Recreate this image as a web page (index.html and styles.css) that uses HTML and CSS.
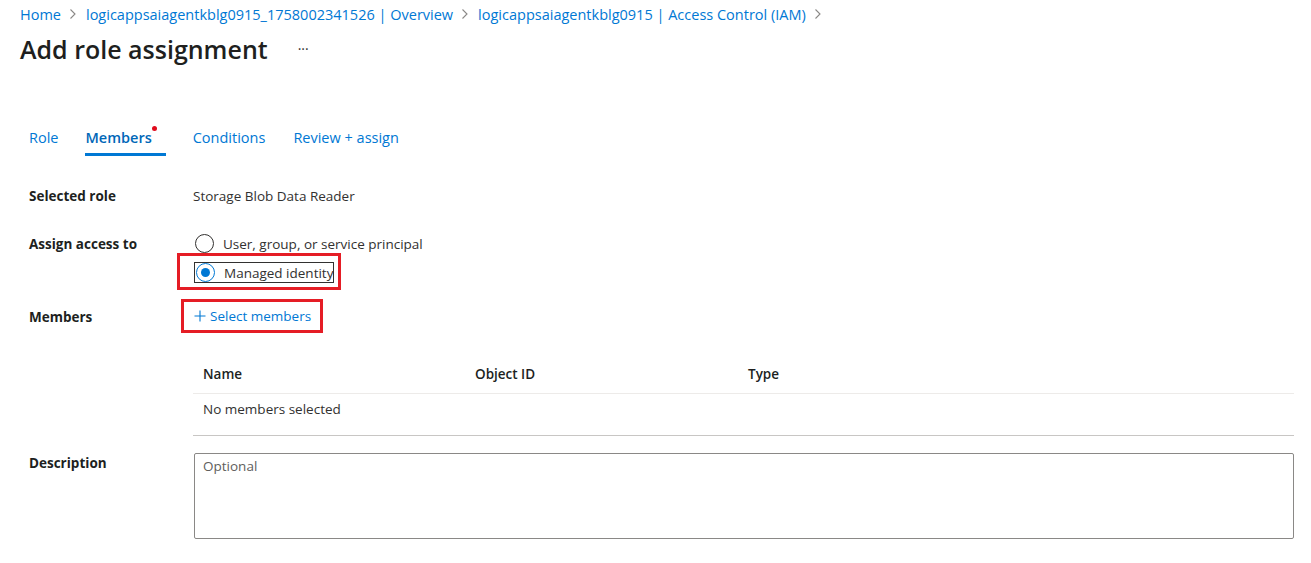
FILE: index.html
```html
<!DOCTYPE html>
<html>
<head>
<meta charset="utf-8">
<link rel="stylesheet" href="styles.css">
</head>
<body>
<div class="page">
  <nav class="crumbs">
    <a class="crumb">Home</a>
    <span class="chev"><svg width="8" height="12" viewBox="0 0 8 12"><path d="M1.5 1.5 L6 6 L1.5 10.5" fill="none" stroke="#8a8886" stroke-width="1.1"/></svg></span>
    <a class="crumb">logicappsaiagentkblg0915_1758002341526 | Overview</a>
    <span class="chev"><svg width="8" height="12" viewBox="0 0 8 12"><path d="M1.5 1.5 L6 6 L1.5 10.5" fill="none" stroke="#8a8886" stroke-width="1.1"/></svg></span>
    <a class="crumb">logicappsaiagentkblg0915 | Access Control (IAM)</a>
    <span class="chev"><svg width="8" height="12" viewBox="0 0 8 12"><path d="M1.5 1.5 L6 6 L1.5 10.5" fill="none" stroke="#8a8886" stroke-width="1.1"/></svg></span>
  </nav>
  <div class="titlebar">
    <h1 class="title">Add role assignment</h1>
    <span class="more">···</span>
  </div>

  <div class="content">
    <div class="tabs">
      <div class="tab">Role</div>
      <div class="tab active">Members<span class="dot"></span></div>
      <div class="tab">Conditions</div>
      <div class="tab">Review + assign</div>
    </div>

    <div class="row r-role">
      <div class="label">Selected role</div>
      <div class="value">Storage Blob Data Reader</div>
    </div>

    <div class="row r-assign">
      <div class="label">Assign access to</div>
      <div class="value radios">
        <div class="radio first"><span class="circle"></span><span>User, group, or service principal</span></div>
        <div class="hl hl-radio">
          <div class="radio checked focus"><span class="circle"><span class="inner"></span></span><span>Managed identity</span></div>
        </div>
      </div>
    </div>

    <div class="row r-members">
      <div class="label">Members</div>
      <div class="value">
        <div class="hl hl-select">
          <span class="select"><svg class="plus" width="12" height="12" viewBox="0 0 12 12"><path d="M6 0.5 V11.5 M0.5 6 H11.5" stroke="#0078d4" stroke-width="1.1" fill="none"/></svg>Select members</span>
        </div>
      </div>
    </div>

    <div class="row r-table">
      <div class="label"></div>
      <div class="value grid">
        <div class="thead">
          <div class="c1">Name</div>
          <div class="c2">Object ID</div>
          <div class="c3">Type</div>
        </div>
        <div class="tbody">No members selected</div>
      </div>
    </div>

    <div class="row r-desc">
      <div class="label">Description</div>
      <div class="value">
        <div class="textarea">Optional</div>
      </div>
    </div>
  </div>
</div>
</body>
</html>
```
FILE: styles.css
```css
* { box-sizing: border-box; }
html, body { margin: 0; padding: 0; background: #fff; }
body {
  font-family: "Open Sans", "Noto Sans", "Liberation Sans", sans-serif;
  color: #323130;
  font-size: 13.5px;
}
.page { width: 1311px; height: 563px; overflow: hidden; }

.crumbs {
  display: flex;
  align-items: center;
  padding: 2px 0 0 20px;
  height: 26px;
  font-size: 14.5px;
}
.crumb { color: #0078d4; text-decoration: none; }
.chev { display: inline-flex; margin: 0 9px 0 8px; }

.titlebar {
  display: flex;
  align-items: center;
  padding-left: 20px;
  height: 46px;
}
.title {
  margin: 0;
  font-size: 25px;
  font-weight: 600;
  color: #201f1e;
}
.more { margin-left: 30px; font-size: 14px; color: #323130; margin-top: -2px; }

.content { padding-left: 29px; padding-top: 56px; }

.tabs { display: flex; height: 58px; align-items: flex-start; }
.tab {
  position: relative;
  color: #0078d4;
  font-size: 14.5px;
  line-height: 20px;
  height: 28px;
  margin-right: 28px;
}
.tab:first-child { margin-right: 27px; }
.tab.active {
  font-weight: 600;
  color: #0067b8;
  border-bottom: 3px solid #0078d4;
  padding-right: 14px;
  margin-right: 27px;
}
.dot {
  position: absolute;
  width: 5px; height: 5px;
  border-radius: 50%;
  background: #e00b1c;
  top: -2px; right: 9px;
}

.row { display: flex; line-height: 20px; }
.label { width: 164px; font-weight: 700; color: #201f1e; flex: none; }
.value { flex: 1; }

.r-role { height: 48px; }

.radios { display: flex; flex-direction: column; }
.radio { display: flex; align-items: center; gap: 9px; color: #323130; }
.radio.first { height: 19px; margin-top: 0; margin-bottom: 1px; }
.circle {
  width: 19px; height: 19px;
  border-radius: 50%;
  border: 1px solid #323130;
  display: inline-flex; align-items: center; justify-content: center;
  margin-left: 2px;
  flex: none;
}
.radio.checked .circle { border-color: #0078d4; }
.inner { width: 9px; height: 9px; border-radius: 50%; background: #0078d4; }

.hl { border: 3px solid #e51d25; display: inline-flex; }
.hl-radio {
  margin-left: -16px;
  margin-top: -1px;
  padding: 6px 4px 4px 14px;
  align-self: flex-start;
}
.focus { border: 1px solid #323130; height: 21px; padding-right: 0; }
.focus .circle { margin-left: 1px; }

.r-members { margin-top: 9px; }
.r-members .label { padding-top: 8px; }
.hl-select {
  margin-left: -12px;
  padding: 0 9px 0 10px;
  height: 34px;
  align-items: center;
}
.select { color: #0078d4; display: inline-flex; align-items: center; gap: 4px; }
.plus { margin-bottom: 1px; }

.r-table { margin-top: 22px; }
.grid { margin-right: 17px; }
.thead {
  display: flex;
  height: 39px;
  border-bottom: 1px solid #edebe9;
  font-weight: 600;
  color: #201f1e;
  padding-left: 10px;
  align-items: center;
}
.c1 { width: 272px; }
.c2 { width: 273px; }
.tbody {
  height: 42px;
  border-bottom: 1px solid #c8c6c4;
  padding-left: 10px;
  padding-top: 5px;
  color: #323130;
}

.r-desc { margin-top: 17px; }
.textarea {
  margin-right: 17px;
  margin-left: 1px;
  height: 86px;
  border: 1px solid #8a8886;
  border-radius: 2px;
  color: #605e5c;
  padding: 2px 8px;
}
```
